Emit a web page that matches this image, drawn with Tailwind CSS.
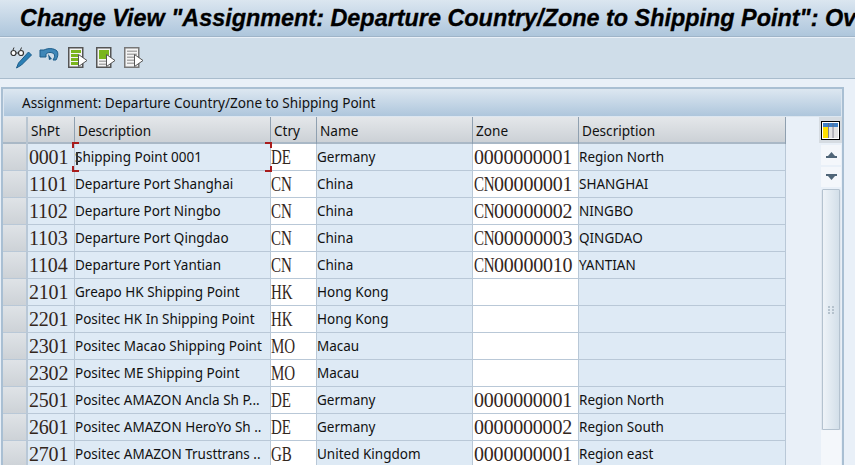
<!DOCTYPE html>
<html lang="en">
  <head>
    <meta charset="UTF-8" />
    <title>Change View</title>
    <script src="https://cdn.jsdelivr.net/npm/@tailwindcss/browser@4"></script>
  </head>
  <body class="w-[855px] h-[465px] overflow-hidden bg-[#e9f0f8] text-[#111] font-['Noto_Sans',sans-serif]">
    <!-- title bar -->
    <div class="h-[37px] pl-[20px] pt-[3px] border-b border-[#9fb4c8] bg-linear-to-b from-[#dbe6f0] to-[#aec6dc] whitespace-nowrap overflow-hidden font-['Liberation_Sans',sans-serif] font-bold italic text-[23.4px] leading-[30px] text-black [-webkit-text-stroke:0.3px_black]">
      Change View "Assignment: Departure Country/Zone to Shipping Point": Ov
    </div>
    <!-- toolbar -->
    <div class="h-[41px] mt-[1px] pl-[10px] pt-[8px] flex border-b border-[#a9bccd] bg-[#cfdde9]">
      <svg class="w-[22px] h-[24px]" viewBox="0 0 22 24">
        <circle cx="3.500" cy="7" r="2.500" fill="#fff" stroke="#333" stroke-width="1.200" />
        <circle cx="11" cy="7" r="2.500" fill="#fff" stroke="#333" stroke-width="1.200" />
        <path d="M6 7h2.500M3 4l1-2.500M10.500 4l1-2.500" stroke="#333" fill="none" />
        <path d="M18.500 6l3 3-10 10-5 3 2-5z" fill="#2a7fb5" stroke="#1d5d8a" />
      </svg>
      <svg class="w-[20px] h-[24px] ml-[7px]" viewBox="0 0 20 24">
        <path d="M1 4h4c4-2 10-2 13 1 1.500 2 1 6-1 9h-3c2-3 2-5 1-6-2-2-6-2-8 0v3H1z" fill="#3f87b8" stroke="#1d5d8a" />
        <path d="M9 8l4 5-3 1z" fill="#1d5d8a" />
      </svg>
      <svg class="w-[20px] h-[22px] ml-[9px] mt-[1px]" viewBox="0 0 20 22">
        <path d="M0.750 0.750h14v19.500h-14z" fill="#f4f4f4" stroke="#555" stroke-width="1.500" />
        <path d="M3 3h10v3H3zM3 7h7v3H3zM3 11h7v3H3zM3 15h7v3H3z" fill="#7ab51d" />
        <path d="M10.500 7.500l8.500 6-8.500 6z" fill="#fff" stroke="#555" />
      </svg>
      <svg class="w-[20px] h-[22px] ml-[8px] mt-[1px]" viewBox="0 0 20 22">
        <path d="M0.750 0.750h14v19.500h-14z" fill="#f4f4f4" stroke="#555" stroke-width="1.500" />
        <path d="M3 3h10v9H3z" fill="#7ab51d" />
        <path d="M3 13.500h7v1.500H3zM3 16.500h7v1.500H3z" fill="#aaa" />
        <path d="M10.500 7.500l8.500 6-8.500 6z" fill="#fff" stroke="#555" />
      </svg>
      <svg class="w-[20px] h-[22px] ml-[8px] mt-[1px]" viewBox="0 0 20 22">
        <path d="M0.750 0.750h14v19.500h-14z" fill="#f4f4f4" stroke="#777" stroke-width="1.500" />
        <path d="M3 3.500h10v1.500H3zM3 6.500h10v1.500H3zM3 9.500h7v1.500H3zM3 12.500h7v1.500H3zM3 15.500h7v1.500H3z" fill="#aaa" />
        <path d="M10.500 7.500l8.500 6-8.500 6z" fill="#fff" stroke="#555" />
      </svg>
    </div>

    <!-- table control -->
    <div class="mt-[8px] ml-[1px] w-[843px] h-[400px] border-2 border-b-0 border-[#a9bfd3]">
      <div class="h-[28px] pl-[18px] text-[13.6px] leading-[25px] border border-[#dce6f0] bg-linear-to-b from-[#dbe6f0] to-[#aec6dc]">
        Assignment: Departure Country/Zone to Shipping Point
      </div>
      <div class="flex">
        <div class="w-[783px] shrink-0">
          <!-- header row -->
          <div class="grid grid-cols-[25px_47px_196px_46px_156px_106px_207px] h-[27px] text-[13.6px] leading-[28px] border-b-2 border-[#a9b8c6] bg-linear-to-b from-[#e4e7ea] to-[#ccd1d6]">
            <div class="border-r-2 border-[#b8c5d1]"></div>
            <div class="border-r border-[#8fa0b0] pl-[3px]">ShPt</div>
            <div class="border-r border-[#8fa0b0] pl-[3px]">Description</div>
            <div class="border-r border-[#8fa0b0] pl-[3px]">Ctry</div>
            <div class="border-r border-[#8fa0b0] pl-[3px]">Name</div>
            <div class="border-r border-[#8fa0b0] pl-[3px]">Zone</div>
            <div class="border-r border-[#8fa0b0] pl-[3px]">Description</div>
          </div>

          <!-- rows -->
          <div class="grid grid-cols-[25px_47px_196px_46px_156px_106px_207px] auto-rows-[27px] text-[13.5px] leading-[27px] whitespace-nowrap [&>div]:border-b [&>div]:border-[#b9c8d7]">
            <div class="bg-linear-to-b from-[#dfe3e7] to-[#cdd2d7] border-r-2 border-r-[#b8c5d1]"></div>
            <div class="bg-[#deeaf5] border-r border-r-[#b9c8d7] pl-[1px] font-['Liberation_Serif',serif] text-[20px] tracking-[-0.2px] text-[#33261c]">0001</div>
            <div class="relative bg-[#deeaf5] border-r border-r-[#b9c8d7]">
              Shipping Point 0001
              <span class="absolute left-[1px] top-[8px] w-[2px] h-[13px] bg-[#333]"></span>
              <span class="absolute -left-[3px] -top-[2px] w-[7px] h-[6px] border-t-2 border-l-2 border-[#a81c1c]"></span>
              <span class="absolute -left-[3px] -bottom-[2px] w-[7px] h-[6px] border-b-2 border-l-2 border-[#a81c1c]"></span>
              <span class="absolute -right-[2px] -top-[2px] w-[7px] h-[6px] border-t-2 border-r-2 border-[#a81c1c]"></span>
              <span class="absolute -right-[2px] -bottom-[2px] w-[7px] h-[6px] border-b-2 border-r-2 border-[#a81c1c]"></span>
            </div>
            <div class="bg-white border-r border-r-[#b9c8d7] font-['Liberation_Serif',serif] text-[20px] text-[#33261c]"><span class="inline-block origin-left scale-x-[0.75]">DE</span></div>
            <div class="bg-[#deeaf5] border-r border-r-[#b9c8d7]">Germany</div>
            <div class="bg-white border-r border-r-[#b9c8d7] pl-[1px] font-['Liberation_Serif',serif] text-[20px] tracking-[-0.2px] text-[#33261c]">0000000001</div>
            <div class="bg-[#deeaf5] border-r border-r-[#b9c8d7]">Region North</div>

            <div class="bg-linear-to-b from-[#dfe3e7] to-[#cdd2d7] border-r-2 border-r-[#b8c5d1]"></div>
            <div class="bg-[#deeaf5] border-r border-r-[#b9c8d7] pl-[1px] font-['Liberation_Serif',serif] text-[20px] tracking-[-0.2px] text-[#33261c]">1101</div>
            <div class="bg-[#deeaf5] border-r border-r-[#b9c8d7]">Departure Port Shanghai</div>
            <div class="bg-white border-r border-r-[#b9c8d7] font-['Liberation_Serif',serif] text-[20px] text-[#33261c]"><span class="inline-block origin-left scale-x-[0.75]">CN</span></div>
            <div class="bg-[#deeaf5] border-r border-r-[#b9c8d7]">China</div>
            <div class="bg-white border-r border-r-[#b9c8d7] pl-[1px] font-['Liberation_Serif',serif] text-[20px] tracking-[-0.2px] text-[#33261c]"><span class="inline-block w-[20px] origin-left scale-x-[0.75]">CN</span>00000001</div>
            <div class="bg-[#deeaf5] border-r border-r-[#b9c8d7]">SHANGHAI</div>

            <div class="bg-linear-to-b from-[#dfe3e7] to-[#cdd2d7] border-r-2 border-r-[#b8c5d1]"></div>
            <div class="bg-[#deeaf5] border-r border-r-[#b9c8d7] pl-[1px] font-['Liberation_Serif',serif] text-[20px] tracking-[-0.2px] text-[#33261c]">1102</div>
            <div class="bg-[#deeaf5] border-r border-r-[#b9c8d7]">Departure Port Ningbo</div>
            <div class="bg-white border-r border-r-[#b9c8d7] font-['Liberation_Serif',serif] text-[20px] text-[#33261c]"><span class="inline-block origin-left scale-x-[0.75]">CN</span></div>
            <div class="bg-[#deeaf5] border-r border-r-[#b9c8d7]">China</div>
            <div class="bg-white border-r border-r-[#b9c8d7] pl-[1px] font-['Liberation_Serif',serif] text-[20px] tracking-[-0.2px] text-[#33261c]"><span class="inline-block w-[20px] origin-left scale-x-[0.75]">CN</span>00000002</div>
            <div class="bg-[#deeaf5] border-r border-r-[#b9c8d7]">NINGBO</div>

            <div class="bg-linear-to-b from-[#dfe3e7] to-[#cdd2d7] border-r-2 border-r-[#b8c5d1]"></div>
            <div class="bg-[#deeaf5] border-r border-r-[#b9c8d7] pl-[1px] font-['Liberation_Serif',serif] text-[20px] tracking-[-0.2px] text-[#33261c]">1103</div>
            <div class="bg-[#deeaf5] border-r border-r-[#b9c8d7]">Departure Port Qingdao</div>
            <div class="bg-white border-r border-r-[#b9c8d7] font-['Liberation_Serif',serif] text-[20px] text-[#33261c]"><span class="inline-block origin-left scale-x-[0.75]">CN</span></div>
            <div class="bg-[#deeaf5] border-r border-r-[#b9c8d7]">China</div>
            <div class="bg-white border-r border-r-[#b9c8d7] pl-[1px] font-['Liberation_Serif',serif] text-[20px] tracking-[-0.2px] text-[#33261c]"><span class="inline-block w-[20px] origin-left scale-x-[0.75]">CN</span>00000003</div>
            <div class="bg-[#deeaf5] border-r border-r-[#b9c8d7]">QINGDAO</div>

            <div class="bg-linear-to-b from-[#dfe3e7] to-[#cdd2d7] border-r-2 border-r-[#b8c5d1]"></div>
            <div class="bg-[#deeaf5] border-r border-r-[#b9c8d7] pl-[1px] font-['Liberation_Serif',serif] text-[20px] tracking-[-0.2px] text-[#33261c]">1104</div>
            <div class="bg-[#deeaf5] border-r border-r-[#b9c8d7]">Departure Port Yantian</div>
            <div class="bg-white border-r border-r-[#b9c8d7] font-['Liberation_Serif',serif] text-[20px] text-[#33261c]"><span class="inline-block origin-left scale-x-[0.75]">CN</span></div>
            <div class="bg-[#deeaf5] border-r border-r-[#b9c8d7]">China</div>
            <div class="bg-white border-r border-r-[#b9c8d7] pl-[1px] font-['Liberation_Serif',serif] text-[20px] tracking-[-0.2px] text-[#33261c]"><span class="inline-block w-[20px] origin-left scale-x-[0.75]">CN</span>00000010</div>
            <div class="bg-[#deeaf5] border-r border-r-[#b9c8d7]">YANTIAN</div>

            <div class="bg-linear-to-b from-[#dfe3e7] to-[#cdd2d7] border-r-2 border-r-[#b8c5d1]"></div>
            <div class="bg-[#deeaf5] border-r border-r-[#b9c8d7] pl-[1px] font-['Liberation_Serif',serif] text-[20px] tracking-[-0.2px] text-[#33261c]">2101</div>
            <div class="bg-[#deeaf5] border-r border-r-[#b9c8d7]">Greapo HK Shipping Point</div>
            <div class="bg-white border-r border-r-[#b9c8d7] font-['Liberation_Serif',serif] text-[20px] text-[#33261c]"><span class="inline-block origin-left scale-x-[0.75]">HK</span></div>
            <div class="bg-[#deeaf5] border-r border-r-[#b9c8d7]">Hong Kong</div>
            <div class="bg-white border-r border-r-[#b9c8d7]"></div>
            <div class="bg-[#deeaf5] border-r border-r-[#b9c8d7]"></div>

            <div class="bg-linear-to-b from-[#dfe3e7] to-[#cdd2d7] border-r-2 border-r-[#b8c5d1]"></div>
            <div class="bg-[#deeaf5] border-r border-r-[#b9c8d7] pl-[1px] font-['Liberation_Serif',serif] text-[20px] tracking-[-0.2px] text-[#33261c]">2201</div>
            <div class="bg-[#deeaf5] border-r border-r-[#b9c8d7]">Positec HK In Shipping Point</div>
            <div class="bg-white border-r border-r-[#b9c8d7] font-['Liberation_Serif',serif] text-[20px] text-[#33261c]"><span class="inline-block origin-left scale-x-[0.75]">HK</span></div>
            <div class="bg-[#deeaf5] border-r border-r-[#b9c8d7]">Hong Kong</div>
            <div class="bg-white border-r border-r-[#b9c8d7]"></div>
            <div class="bg-[#deeaf5] border-r border-r-[#b9c8d7]"></div>

            <div class="bg-linear-to-b from-[#dfe3e7] to-[#cdd2d7] border-r-2 border-r-[#b8c5d1]"></div>
            <div class="bg-[#deeaf5] border-r border-r-[#b9c8d7] pl-[1px] font-['Liberation_Serif',serif] text-[20px] tracking-[-0.2px] text-[#33261c]">2301</div>
            <div class="bg-[#deeaf5] border-r border-r-[#b9c8d7]">Positec Macao Shipping Point</div>
            <div class="bg-white border-r border-r-[#b9c8d7] font-['Liberation_Serif',serif] text-[20px] text-[#33261c]"><span class="inline-block origin-left scale-x-[0.75]">MO</span></div>
            <div class="bg-[#deeaf5] border-r border-r-[#b9c8d7]">Macau</div>
            <div class="bg-white border-r border-r-[#b9c8d7]"></div>
            <div class="bg-[#deeaf5] border-r border-r-[#b9c8d7]"></div>

            <div class="bg-linear-to-b from-[#dfe3e7] to-[#cdd2d7] border-r-2 border-r-[#b8c5d1]"></div>
            <div class="bg-[#deeaf5] border-r border-r-[#b9c8d7] pl-[1px] font-['Liberation_Serif',serif] text-[20px] tracking-[-0.2px] text-[#33261c]">2302</div>
            <div class="bg-[#deeaf5] border-r border-r-[#b9c8d7]">Positec ME Shipping Point</div>
            <div class="bg-white border-r border-r-[#b9c8d7] font-['Liberation_Serif',serif] text-[20px] text-[#33261c]"><span class="inline-block origin-left scale-x-[0.75]">MO</span></div>
            <div class="bg-[#deeaf5] border-r border-r-[#b9c8d7]">Macau</div>
            <div class="bg-white border-r border-r-[#b9c8d7]"></div>
            <div class="bg-[#deeaf5] border-r border-r-[#b9c8d7]"></div>

            <div class="bg-linear-to-b from-[#dfe3e7] to-[#cdd2d7] border-r-2 border-r-[#b8c5d1]"></div>
            <div class="bg-[#deeaf5] border-r border-r-[#b9c8d7] pl-[1px] font-['Liberation_Serif',serif] text-[20px] tracking-[-0.2px] text-[#33261c]">2501</div>
            <div class="bg-[#deeaf5] border-r border-r-[#b9c8d7]">Positec AMAZON Ancla Sh P...</div>
            <div class="bg-white border-r border-r-[#b9c8d7] font-['Liberation_Serif',serif] text-[20px] text-[#33261c]"><span class="inline-block origin-left scale-x-[0.75]">DE</span></div>
            <div class="bg-[#deeaf5] border-r border-r-[#b9c8d7]">Germany</div>
            <div class="bg-white border-r border-r-[#b9c8d7] pl-[1px] font-['Liberation_Serif',serif] text-[20px] tracking-[-0.2px] text-[#33261c]">0000000001</div>
            <div class="bg-[#deeaf5] border-r border-r-[#b9c8d7]">Region North</div>

            <div class="bg-linear-to-b from-[#dfe3e7] to-[#cdd2d7] border-r-2 border-r-[#b8c5d1]"></div>
            <div class="bg-[#deeaf5] border-r border-r-[#b9c8d7] pl-[1px] font-['Liberation_Serif',serif] text-[20px] tracking-[-0.2px] text-[#33261c]">2601</div>
            <div class="bg-[#deeaf5] border-r border-r-[#b9c8d7]">Positec AMAZON HeroYo Sh ..</div>
            <div class="bg-white border-r border-r-[#b9c8d7] font-['Liberation_Serif',serif] text-[20px] text-[#33261c]"><span class="inline-block origin-left scale-x-[0.75]">DE</span></div>
            <div class="bg-[#deeaf5] border-r border-r-[#b9c8d7]">Germany</div>
            <div class="bg-white border-r border-r-[#b9c8d7] pl-[1px] font-['Liberation_Serif',serif] text-[20px] tracking-[-0.2px] text-[#33261c]">0000000002</div>
            <div class="bg-[#deeaf5] border-r border-r-[#b9c8d7]">Region South</div>

            <div class="bg-linear-to-b from-[#dfe3e7] to-[#cdd2d7] border-r-2 border-r-[#b8c5d1]"></div>
            <div class="bg-[#deeaf5] border-r border-r-[#b9c8d7] pl-[1px] font-['Liberation_Serif',serif] text-[20px] tracking-[-0.2px] text-[#33261c]">2701</div>
            <div class="bg-[#deeaf5] border-r border-r-[#b9c8d7]">Positec AMAZON Trusttrans ..</div>
            <div class="bg-white border-r border-r-[#b9c8d7] font-['Liberation_Serif',serif] text-[20px] text-[#33261c]"><span class="inline-block origin-left scale-x-[0.75]">GB</span></div>
            <div class="bg-[#deeaf5] border-r border-r-[#b9c8d7]">United Kingdom</div>
            <div class="bg-white border-r border-r-[#b9c8d7] pl-[1px] font-['Liberation_Serif',serif] text-[20px] tracking-[-0.2px] text-[#33261c]">0000000001</div>
            <div class="bg-[#deeaf5] border-r border-r-[#b9c8d7]">Region east</div>
          </div>
        </div>

        <!-- scrollbar column -->
        <div class="w-[56px] pl-[33px] flex flex-col">
          <div class="w-[23px] h-[26px] bg-[#d6dce2] flex items-center justify-center">
            <svg class="w-[19px] h-[19px]" viewBox="0 0 19 19">
              <rect x="0.500" y="0.500" width="18" height="18" fill="#fff" />
              <rect x="2" y="2" width="5" height="15" fill="#ffe000" />
              <rect x="7.500" y="2" width="4" height="15" fill="#e4e4e4" />
              <rect x="12" y="2" width="5" height="15" fill="#e4e4e4" />
              <rect x="2" y="2" width="15" height="4" fill="#3f7fc4" />
              <rect x="0.500" y="0.500" width="18" height="18" fill="none" stroke="#000" />
              <path d="M7.500 2v15M12 2v15" stroke="#667" stroke-width="0.800" />
            </svg>
          </div>
          <div class="w-[20px] h-[20px] mt-[2px] ml-[2px] bg-[#f4f7fb] flex items-center justify-center">
            <svg class="w-[11px] h-[6px]" viewBox="0 0 11 6"><path d="M5.500 0L9 4h2v2H0V4h2z" fill="#4f6578" /></svg>
          </div>
          <div class="w-[20px] h-[20px] mt-[2px] ml-[2px] bg-[#f4f7fb] flex items-center justify-center">
            <svg class="w-[11px] h-[6px]" viewBox="0 0 11 6"><path d="M0 0h11v2H9L5.500 6 2 2H0z" fill="#4f6578" /></svg>
          </div>
          <div class="w-[18px] h-[241px] mt-[2px] ml-[3px] shrink-0 flex items-center justify-center border border-[#b4c2cf] rounded-[1px] bg-linear-to-r from-[#eef3f8] to-[#d3dfe9] shadow-[0_1px_1px_#8a98a5]">
            <svg class="w-[6px] h-[8px]" viewBox="0 0 6 8"><path d="M0 0h2v2H0zM4 0h2v2H4zM0 3h2v2H0zM4 3h2v2H4zM0 6h2v2H0zM4 6h2v2H4z" fill="#b5c2cd" /></svg>
          </div>
          <div class="w-[20px] h-[40px] ml-[2px] bg-[#f4f7fb]"></div>
        </div>
      </div>
    </div>
  </body>
</html>
